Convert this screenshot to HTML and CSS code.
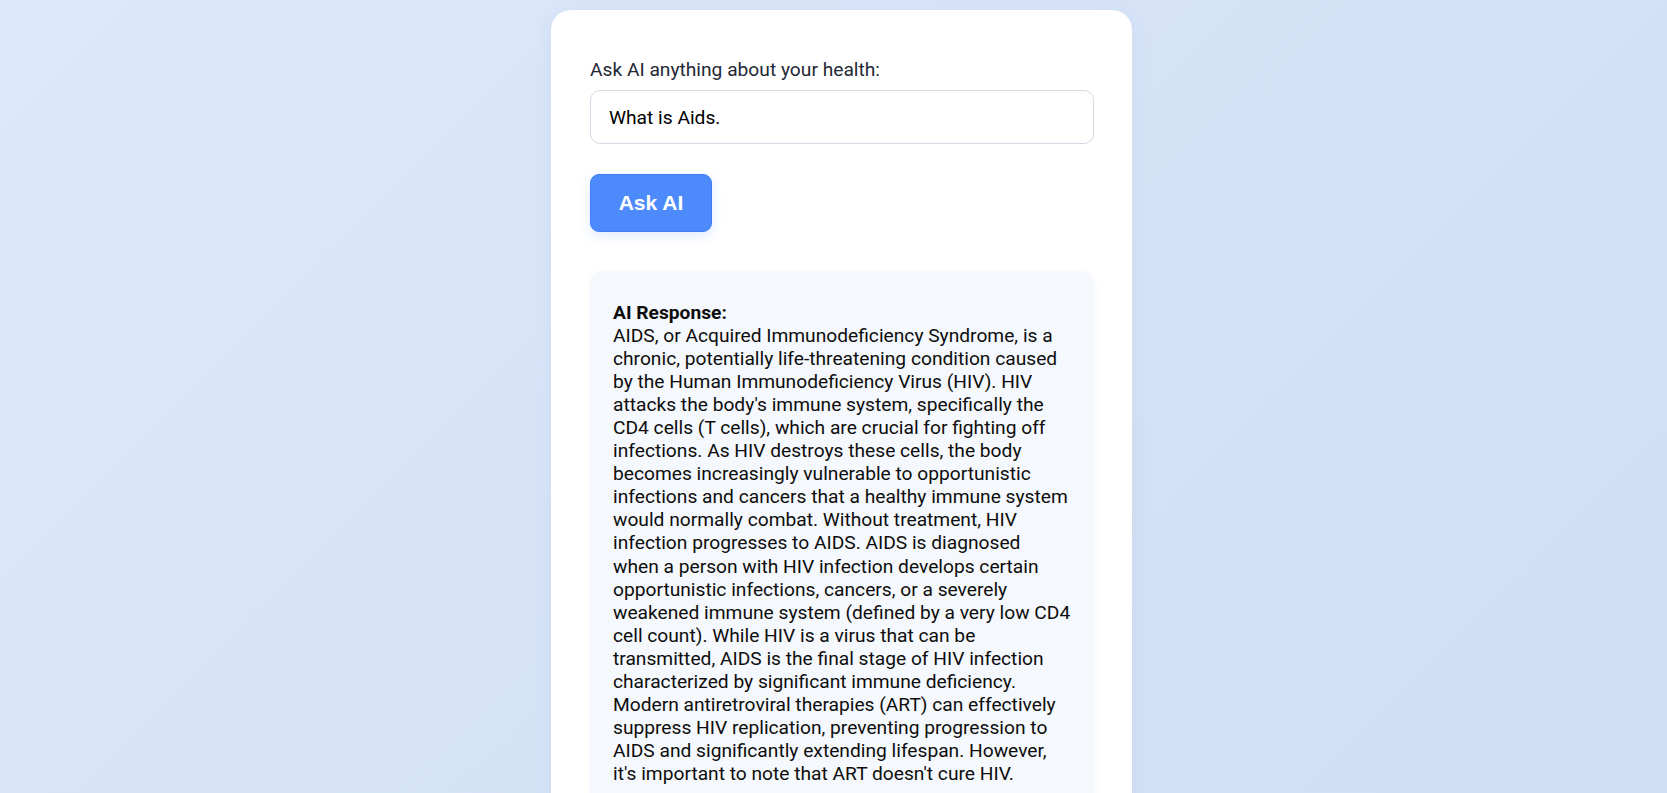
FILE: index.html
```html
<!DOCTYPE html>
<html lang="en">
<head>
<meta charset="utf-8">
<title>Ask AI</title>
<link rel="stylesheet" href="styles.css">
</head>
<body>
<div class="page">
  <main class="card">
    <label class="label" for="q">Ask AI anything about your health:</label>
    <input class="input" id="q" type="text" value="What is Aids.">
    <button class="btn" type="button">Ask AI</button>
    <section class="response"><strong>AI Response:</strong><br>AIDS, or Acquired Immunodeficiency Syndrome, is a chronic, potentially life-threatening condition caused by the Human Immunodeficiency Virus (HIV). HIV attacks the body's immune system, specifically the CD4 cells (T cells), which are crucial for fighting off infections. As HIV destroys these cells, the body becomes increasingly vulnerable to opportunistic infections and cancers that a healthy immune system would normally combat. Without treatment, HIV infection progresses to AIDS. AIDS is diagnosed when&nbsp;a person with HIV infection develops certain opportunistic infections, cancers, or a severely weakened immune system (defined by a very low CD4 cell count). While HIV is a virus that can be transmitted, AIDS is the final stage of HIV infection characterized by significant immune deficiency. Modern antiretroviral therapies (ART) can effectively suppress HIV replication, preventing progression to AIDS and significantly extending lifespan. However, it's important to note that ART doesn't cure HIV.</section>
  </main>
</div>
</body>
</html>
```

FILE: styles.css
```css
* { box-sizing: border-box; }

html, body {
  margin: 0;
  padding: 0;
}

body {
  min-height: 100vh;
  background: linear-gradient(135deg, #dde8fa 0%, #cedef4 100%);
  background-attachment: fixed;
  font-family: Roboto, "Liberation Sans", Arial, sans-serif;
}

.page {
  display: flex;
  justify-content: center;
  padding: 10px 0 40px 16px;
}

.card {
  width: 581px;
  background: #ffffff;
  border-radius: 20px;
  padding: 49px 38px 40px 39px;
  display: flex;
  flex-direction: column;
  align-items: flex-start;
  box-shadow: 0 4px 20px rgba(60, 90, 140, 0.06);
}

.label {
  font-size: 19.2px;
  line-height: 22px;
  color: #232835;
  margin-bottom: 9px;
}

.input {
  width: 100%;
  height: 54px;
  padding: 0 18px;
  border: 1px solid #d3dae5;
  border-radius: 10px;
  font-family: Roboto, "Liberation Sans", Arial, sans-serif;
  font-size: 19.2px;
  color: #000;
  background: #fff;
  outline: none;
}

.btn {
  margin-top: 30px;
  width: 122px;
  height: 58px;
  border: 1px solid #3d7ff2;
  border-radius: 9px;
  background: #4d8bfd;
  color: #fff;
  font-family: "Liberation Sans", Arial, sans-serif;
  font-weight: 700;
  font-size: 21px;
  box-shadow: 0 4px 12px rgba(77, 139, 253, 0.18);
  cursor: pointer;
}

.response {
  margin-top: 39px;
  width: 100%;
  background: #f5f8fc;
  border-radius: 14px;
  padding: 30px 23px 30px 23px;
  font-size: 19.2px;
  line-height: 23.05px;
  color: #0d0d0d;
  box-shadow: 0 2px 10px rgba(40, 70, 120, 0.04);
}

.response strong {
  font-weight: 700;
}
```
